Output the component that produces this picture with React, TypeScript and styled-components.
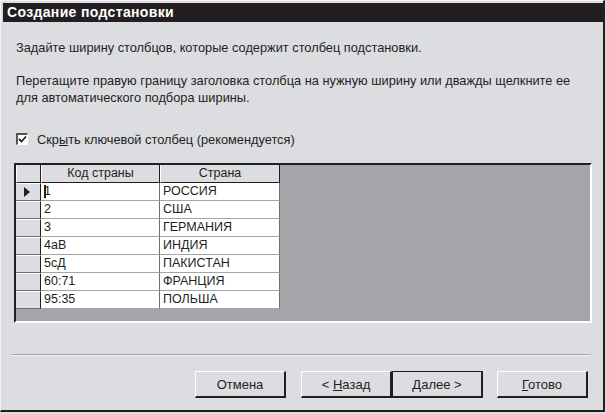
import { Fragment } from "react";
import { createGlobalStyle, styled } from "styled-components";

const GlobalStyle = createGlobalStyle`
  html, body {
    margin: 0;
    padding: 0;
    background: #dcdde0;
  }
  body {
    font-family: "Liberation Sans", Arial, sans-serif;
  }
`;

const Frame = styled.div`
  width: 602px;
  height: 409px;
  background: #dcdde0;
  border-top: 1px solid #f4f4f4;
  border-left: 1px solid #f4f4f4;
  border-right: 2px solid #231f20;
  border-bottom: 2px solid #231f20;
  display: flex;
  flex-direction: column;
`;

const TitleBar = styled.div`
  margin: 2px 0 0 2px;
  height: 19px;
  background: #231f20;
  color: #ffffff;
  font-weight: bold;
  font-size: 14px;
  line-height: 19px;
  padding-left: 4px;
  letter-spacing: 0.35px;
`;

const Text = styled.p<{ $top: number }>`
  margin: ${(p) => p.$top}px 0 0 15px;
  font-size: 12.8px;
  line-height: 17px;
  color: #231f20;
`;

const CheckRow = styled.label`
  margin: 26px 0 0 15px;
  display: flex;
  align-items: center;
  gap: 9px;
  font-size: 12.8px;
  height: 14px;
  color: #231f20;
`;

const CheckBox = styled.span`
  width: 9px;
  height: 9px;
  background: #fff;
  border-top: 2px solid #555;
  border-left: 2px solid #555;
  border-right: 1px solid #fff;
  border-bottom: 1px solid #fff;
  display: flex;
  align-items: center;
  justify-content: center;
`;

const Sheet = styled.div`
  margin: 17px 0 0 13px;
  width: 574px;
  height: 156px;
  background: #a4a5a8;
  border-top: 2px solid #231f20;
  border-left: 2px solid #231f20;
  border-right: 2px solid #ffffff;
  border-bottom: 2px solid #ffffff;
`;

const Grid = styled.div`
  display: grid;
  grid-template-columns: 25px 119px 120px;
  grid-auto-rows: 18px;
  width: 264px;
`;

const HeadCell = styled.div`
  background: #dcdde0;
  border-left: 1px solid #ffffff;
  border-right: 1px solid #231f20;
  border-bottom: 1px solid #231f20;
  font-size: 12.5px;
  line-height: 17px;
  text-align: center;
  color: #231f20;
  box-sizing: border-box;
`;

const Selector = styled.div`
  background: #dcdde0;
  border-top: 1px solid #ffffff;
  border-right: 1px solid #231f20;
  border-bottom: 1px solid #6e6e70;
  box-sizing: border-box;
  display: flex;
  align-items: center;
  padding-left: 8px;
`;

const Cell = styled.div`
  background: #ffffff;
  border-right: 1px solid #6e6e70;
  border-bottom: 1px solid #a4a5a8;
  font-size: 12.5px;
  line-height: 17px;
  padding-left: 3px;
  box-sizing: border-box;
  color: #231f20;
  white-space: nowrap;
  display: flex;
  align-items: center;
`;

const Caret = styled.span`
  display: inline-block;
  width: 2px;
  height: 13px;
  background: #231f20;
  margin-right: -2px;
`;

const Separator = styled.div`
  margin: 31px 0 0 11px;
  width: 579px;
  height: 1px;
  background: #a4a5a8;
  border-bottom: 1px solid #f4f4f4;
`;

const Buttons = styled.div`
  margin: 15px 15px 0 0;
  display: flex;
  justify-content: flex-end;
`;

const Button = styled.button<{ $default?: boolean; $gap?: number }>`
  margin-left: ${(p) => p.$gap ?? 0}px;
  width: 91px;
  height: 27px;
  padding: 0;
  background: #dcdde0;
  font-family: "Liberation Sans", Arial, sans-serif;
  font-size: 13px;
  color: #231f20;
  border-top: 1px solid #ffffff;
  border-left: 1px solid #ffffff;
  border-right: 2px solid #231f20;
  border-bottom: 2px solid #231f20;
  outline: ${(p) => (p.$default ? "1px solid #231f20" : "none")};
  outline-offset: -1px;
  u {
    text-decoration: underline;
  }
`;

const rows = [
  ["1", "РОССИЯ"],
  ["2", "США"],
  ["3", "ГЕРМАНИЯ"],
  ["4аВ", "ИНДИЯ"],
  ["5сД", "ПАКИСТАН"],
  ["60:71", "ФРАНЦИЯ"],
  ["95:35", "ПОЛЬША"],
];

export default function App() {
  return (
    <>
      <GlobalStyle />
      <Frame>
        <TitleBar>Создание подстановки</TitleBar>
        <Text $top={17}>Задайте ширину столбцов, которые содержит столбец подстановки.</Text>
        <Text $top={16}>
          Перетащите правую границу заголовка столбца на нужную ширину или дважды щелкните ее
          <br />
          для автоматического подбора ширины.
        </Text>
        <CheckRow>
          <CheckBox>
            <svg width="9" height="9" viewBox="0 0 9 9">
              <path d="M1 4 L3.5 6.5 L8 1.5" stroke="#231f20" strokeWidth="1.8" fill="none" />
            </svg>
          </CheckBox>
          <span>
            Скр<u>ы</u>ть ключевой столбец (рекомендуется)
          </span>
        </CheckRow>
        <Sheet>
          <Grid>
            <HeadCell />
            <HeadCell>Код страны</HeadCell>
            <HeadCell>Страна</HeadCell>
            {rows.map(([code, name], i) => (
              <Fragment key={code}>
                <Selector>
                  {i === 0 ? (
                    <svg width="6" height="10" viewBox="0 0 6 10">
                      <path d="M0 0 L6 5 L0 10 Z" fill="#231f20" />
                    </svg>
                  ) : null}
                </Selector>
                <Cell>
                  {i === 0 ? <Caret /> : null}
                  {code}
                </Cell>
                <Cell>{name}</Cell>
              </Fragment>
            ))}
          </Grid>
        </Sheet>
        <Separator />
        <Buttons>
          <Button>Отмена</Button>
          <Button $gap={15}>
            &lt; <u>Н</u>азад
          </Button>
          <Button $default>
            <u>Д</u>алее &gt;
          </Button>
          <Button $gap={14}>
            <u>Г</u>отово
          </Button>
        </Buttons>
      </Frame>
    </>
  );
}
